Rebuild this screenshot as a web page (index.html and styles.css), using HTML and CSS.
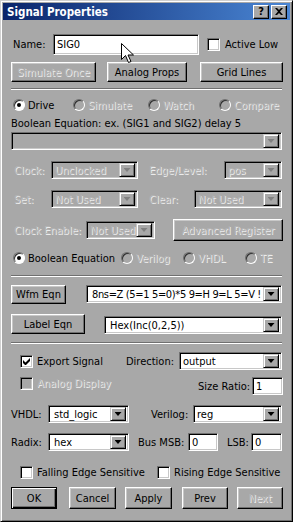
FILE: index.html
```html
<!DOCTYPE html>
<html lang="en">
<head>
  <meta charset="UTF-8">
  <meta name="viewport" content="width=device-width, initial-scale=1">
  <title>Signal Properties</title>
  <link rel="stylesheet" href="styles.css">
</head>
<body>
  <div class="window">
    <!-- Title bar -->
    <div class="titlebar">
      <span class="title">Signal Properties</span>
      <span class="cap-btns">
        <span class="cap-btn help">?</span>
        <span class="cap-btn close">
          <svg width="8" height="7" viewBox="0 0 8 7"><path d="M0 0h2l2 2 2-2h2L5 3.5 8 7H6L4 5 2 7H0l3-3.5z" fill="#000"/></svg>
        </span>
      </span>
    </div>

    <div class="content">
      <!-- Name -->
      <div class="row name-row">
        <span class="lbl l-name">Name:</span>
        <div class="field name-field">SIG0</div>
        <span class="check-opt active-low"><span class="box"></span>Active Low</span>
      </div>

      <div class="row btn-row">
        <div class="btn dis b-sim">Simulate Once</div>
        <div class="btn b-analog">Analog Props</div>
        <div class="btn b-grid">Grid Lines</div>
      </div>

      <div class="sep sep1"></div>

      <!-- Mode -->
      <div class="row radio-row mode-row">
        <span class="opt o-drive"><span class="radio on"></span>Drive</span>
        <span class="opt o-sim dis"><span class="radio"></span>Simulate</span>
        <span class="opt o-watch dis"><span class="radio"></span>Watch</span>
        <span class="opt dis"><span class="radio"></span>Compare</span>
      </div>

      <div class="row bool-lbl">Boolean Equation: ex. (SIG1 and SIG2) delay 5</div>
      <div class="combo off bool-combo"><span class="val"></span><span class="drop"></span></div>

      <!-- Register settings -->
      <div class="row reg-row r-clock">
        <span class="lbl dis l-a">Clock:</span>
        <div class="combo off c-a"><span class="val">Unclocked</span><span class="drop"></span></div>
        <span class="lbl dis l-edge">Edge/Level:</span>
        <div class="combo off c-edge"><span class="val">pos</span><span class="drop"></span></div>
      </div>
      <div class="row reg-row r-set">
        <span class="lbl dis l-a">Set:</span>
        <div class="combo off c-a"><span class="val">Not Used</span><span class="drop"></span></div>
        <span class="lbl dis l-clear">Clear:</span>
        <div class="combo off c-clear"><span class="val">Not Used</span><span class="drop"></span></div>
      </div>
      <div class="row r-enable">
        <span class="lbl dis l-enable">Clock Enable:</span>
        <div class="combo off c-enable"><span class="val">Not Used</span><span class="drop"></span></div>
        <div class="btn dis b-adv">Advanced Register</div>
      </div>

      <div class="row radio-row lang-row">
        <span class="opt o-bool"><span class="radio on"></span>Boolean Equation</span>
        <span class="opt o-ver dis"><span class="radio"></span>Verilog</span>
        <span class="opt o-vhdl dis"><span class="radio"></span>VHDL</span>
        <span class="opt dis"><span class="radio"></span>TE</span>
      </div>

      <div class="sep sep2"></div>

      <!-- Equations -->
      <div class="row eqn-row wfm-row">
        <div class="btn b-wfm">Wfm Eqn</div>
        <div class="combo c-wfm"><span class="val">8ns=Z (5=1 5=0)*5 9=H 9=L 5=V !</span><span class="drop"></span></div>
      </div>
      <div class="row eqn-row label-row">
        <div class="btn b-label">Label Eqn</div>
        <div class="combo c-label"><span class="val">Hex(Inc(0,2,5))</span><span class="drop"></span></div>
      </div>

      <div class="sep sep3"></div>

      <!-- Export -->
      <div class="row export-row">
        <span class="check-opt ck-export"><span class="box checked">
          <svg width="7" height="7" viewBox="0 0 7 7"><path d="M0 2v3l2 2h1l4-4V0L2.5 4.5z" fill="#000"/></svg>
        </span>Export Signal</span>
        <span class="lbl l-dir">Direction:</span>
        <div class="combo c-dir"><span class="val">output</span><span class="drop"></span></div>
      </div>
      <div class="row ratio-row">
        <span class="check-opt dis"><span class="box off"></span>Analog Display</span>
        <span class="lbl l-ratio">Size Ratio:</span>
        <div class="field f-ratio">1</div>
      </div>
      <div class="row type-row">
        <span class="lbl l-vhdl">VHDL:</span>
        <div class="combo c-vhdl"><span class="val">std_logic</span><span class="drop"></span></div>
        <span class="lbl l-verilog">Verilog:</span>
        <div class="combo c-verilog"><span class="val">reg</span><span class="drop"></span></div>
      </div>
      <div class="row type-row radix-row">
        <span class="lbl l-vhdl">Radix:</span>
        <div class="combo c-vhdl"><span class="val">hex</span><span class="drop"></span></div>
        <span class="lbl l-msb">Bus MSB:</span>
        <div class="field f-msb">0</div>
        <span class="lbl l-lsb">LSB:</span>
        <div class="field f-lsb">0</div>
      </div>

      <div class="row edge-row">
        <span class="check-opt ck-fall"><span class="box"></span>Falling Edge Sensitive</span>
        <span class="check-opt"><span class="box"></span>Rising Edge Sensitive</span>
      </div>

      <!-- Dialog buttons -->
      <div class="row foot-row">
        <div class="btn default b-ok">OK</div>
        <div class="btn b-cancel">Cancel</div>
        <div class="btn b-apply">Apply</div>
        <div class="btn b-prev">Prev</div>
        <div class="btn dis b-next">Next</div>
      </div>
    </div>

    <!-- Mouse pointer over the name box -->
    <svg class="pointer" width="13" height="21" viewBox="0 0 13 21">
      <path d="M0.5 0.5v16l4-4 3 7 2.5-1-3-6.5h5.5z" fill="#fff" stroke="#000" stroke-width="1"/>
    </svg>
  </div>
</body>
</html>
```

FILE: styles.css
```css
/* Global */
* {
  margin: 0;
  padding: 0;
  box-sizing: border-box;
}
body {
  background: #a8a8a8;
  font-family: "DejaVu Sans Condensed", "DejaVu Sans", sans-serif;
  font-stretch: condensed;
  font-size: 11px;
  color: #000;
}
.window {
  position: relative;
  width: 293px;
  height: 522px;
  padding: 2px;
  background: #a8a8a8;
  border: 1px solid;
  border-color: #d0d0d0 #000 #000 #d0d0d0;
  box-shadow: inset 1px 1px #fff, inset -1px -1px #707070;
}

/* Title bar */
.titlebar {
  height: 17px;
  display: flex;
  align-items: center;
  justify-content: space-between;
  padding: 0 3px 0 4px;
  background: linear-gradient(90deg, #0a246a, #4a86d4);
  color: #fff;
}
.title {
  font-weight: bold;
  font-size: 11.5px;
}
.cap-btns {
  display: flex;
  gap: 2px;
}
.cap-btn {
  width: 16px;
  height: 14px;
  display: flex;
  align-items: center;
  justify-content: center;
  background: #a8a8a8;
  border: 1px solid;
  border-color: #fff #000 #000 #fff;
  box-shadow: inset -1px -1px #707070;
  color: #000;
  font-weight: bold;
  font-size: 11px;
}

.content {
  padding: 0 7px 0 8px;
}
.row {
  display: flex;
  align-items: center;
}

/* Shared controls */
.dis {
  color: #b4b4b4;
  text-shadow: 1px 1px #ececec;
}
.lbl {
  flex: none;
  white-space: nowrap;
}
.field {
  flex: none;
  height: 18px;
  display: flex;
  align-items: center;
  padding-left: 3px;
  background: #fff;
  border: 1px solid;
  border-color: #707070 #fff #fff #707070;
  box-shadow: inset 1px 1px #000, inset -1px -1px #c8c8c8;
}
.combo {
  flex: none;
  height: 18px;
  display: flex;
  align-items: center;
  padding: 2px;
  background: #fff;
  border: 1px solid;
  border-color: #707070 #fff #fff #707070;
  box-shadow: inset 1px 1px #000, inset -1px -1px #c8c8c8;
  overflow: hidden;
}
.combo .val {
  flex: 1;
  padding-left: 1px;
  white-space: nowrap;
  overflow: hidden;
}
.combo.off {
  background: #a8a8a8;
}
.combo.off .val {
  color: #b4b4b4;
  text-shadow: 1px 1px #ececec;
}
.drop {
  flex: none;
  width: 16px;
  height: 14px;
  display: flex;
  align-items: center;
  justify-content: center;
  background: #a8a8a8;
  border: 1px solid;
  border-color: #c8c8c8 #000 #000 #c8c8c8;
  box-shadow: inset 1px 1px #fff, inset -1px -1px #707070;
}
.drop::after {
  content: "";
  width: 7px;
  height: 4px;
  background: #000;
  clip-path: polygon(0 0, 100% 0, 50% 100%);
}
.combo.off .drop::after {
  background: #808080;
}
.btn {
  flex: none;
  height: 20px;
  display: flex;
  align-items: center;
  justify-content: center;
  background: #a8a8a8;
  border: 1px solid;
  border-color: #fff #000 #000 #fff;
  box-shadow: inset -1px -1px #707070, inset 1px 1px #c8c8c8;
  white-space: nowrap;
}
.btn.default {
  border-color: #000;
  box-shadow: inset 1px 1px #fff, inset -1px -1px #000, inset -2px -2px #707070;
}
.sep {
  height: 2px;
  border-top: 1px solid #707070;
  border-bottom: 1px solid #fff;
  margin-right: 1px;
}
.radio {
  flex: none;
  position: relative;
  width: 12px;
  height: 12px;
  margin-right: 3px;
  border-radius: 50%;
  background: #a8a8a8;
  border: 1px solid;
  border-color: #707070 #fff #fff #707070;
  box-shadow: inset 1px 1px #303030;
}
.radio.on {
  background: #fff;
}
.radio.on::after {
  content: "";
  position: absolute;
  left: 3px;
  top: 3px;
  width: 4px;
  height: 4px;
  border-radius: 50%;
  background: #000;
}
.opt {
  display: flex;
  align-items: center;
  flex: none;
}
.check-opt {
  display: flex;
  align-items: center;
  flex: none;
}
.box {
  flex: none;
  width: 13px;
  height: 13px;
  margin-right: 4px;
  display: flex;
  align-items: center;
  justify-content: center;
  background: #fff;
  border: 1px solid;
  border-color: #707070 #fff #fff #707070;
  box-shadow: inset 1px 1px #000, inset -1px -1px #c8c8c8;
}
.box.off {
  background: #a8a8a8;
}

/* Name row */
.name-row {
  margin-top: 14px;
  height: 21px;
}
.l-name {
  width: 40px;
  margin-left: 2px;
}
.name-field {
  width: 146px;
  height: 21px;
}
.active-low {
  margin-left: 8px;
}
.active-low .box {
  margin-right: 5px;
}
.btn-row {
  margin-top: 7px;
}
.b-sim { width: 85px; }
.b-analog { width: 80px; margin-left: 11px; }
.b-grid { width: 83px; margin-left: 13px; }
.sep1 { margin-top: 6px; }

/* Radio rows */
.radio-row {
  height: 14px;
}
.mode-row {
  margin-top: 8px;
  padding-left: 2px;
}
.o-drive { width: 60px; }
.o-sim { width: 75px; }
.o-watch { width: 71px; }
.bool-lbl {
  height: 14px;
  margin-top: 4px;
}
.bool-combo {
  margin-top: 2px;
  margin-right: 1px;
}

/* Register rows */
.reg-row {
  height: 18px;
}
.r-clock { margin-top: 11px; }
.r-set { margin-top: 11px; }
.l-a { width: 37px; margin-left: 3px; }
.c-a { width: 87px; }
.l-edge { width: 75px; margin-left: 11px; }
.c-edge { width: 58px; }
.l-clear { width: 45px; margin-left: 11px; }
.c-clear { width: 88px; }
.r-enable {
  margin-top: 11px;
  height: 22px;
}
.l-enable { width: 72px; margin-left: 3px; }
.c-enable { width: 69px; }
.b-adv {
  width: 110px;
  height: 22px;
  margin-left: 18px;
}
.lang-row {
  margin-top: 10px;
  padding-left: 2px;
}
.o-bool { width: 108px; }
.o-ver { width: 62px; }
.o-vhdl { width: 62px; }
.sep2 { margin-top: 10px; }

/* Equation rows */
.eqn-row {
  align-items: flex-start;
}
.wfm-row { margin-top: 8px; }
.b-wfm { width: 55px; height: 19px; }
.c-wfm { width: 196px; margin-left: 20px; }
.c-wfm .val {
  padding-left: 3px;
  letter-spacing: -0.35px;
}
.label-row { margin-top: 10px; align-items: flex-end; }
.b-label { width: 74px; }
.c-label { width: 178px; margin-left: 19px; }
.c-label .val { padding-left: 3px; }
.sep3 { margin-top: 8px; }

/* Export block */
.export-row {
  margin-top: 8px;
  height: 18px;
}
.ck-export {
  width: 106px;
  margin-left: 9px;
}
.l-dir { width: 53px; }
.c-dir { width: 103px; }
.ratio-row {
  margin-top: 7px;
  height: 18px;
}
.ratio-row .check-opt {
  margin-left: 9px;
  align-self: flex-start;
}
.l-ratio { margin-left: auto; width: 54px; }
.f-ratio { width: 31px; }
.type-row {
  margin-top: 10px;
  height: 18px;
}
.l-vhdl { width: 37px; }
.c-vhdl { width: 81px; }
.c-vhdl .val { padding-left: 3px; }
.l-verilog { width: 42px; margin-left: 22px; }
.c-verilog { width: 89px; }
.l-msb { width: 50px; margin-left: 9px; }
.f-msb { width: 30px; }
.l-lsb { width: 24px; margin-left: 9px; }
.f-lsb { width: 31px; }
.edge-row {
  margin-top: 15px;
  height: 13px;
}
.ck-fall {
  width: 137px;
  margin-left: 9px;
}

/* Dialog buttons */
.foot-row {
  margin-top: 8px;
}
.foot-row .btn { height: 22px; }
.b-ok { width: 46px; }
.b-cancel { width: 47px; margin-left: 12px; }
.b-apply { width: 47px; margin-left: 9px; }
.b-prev { width: 46px; margin-left: 10px; }
.b-next { width: 46px; margin-left: 9px; }

/* Pointer overlay */
.pointer {
  position: absolute;
  left: 120px;
  top: 42px;
}
```
